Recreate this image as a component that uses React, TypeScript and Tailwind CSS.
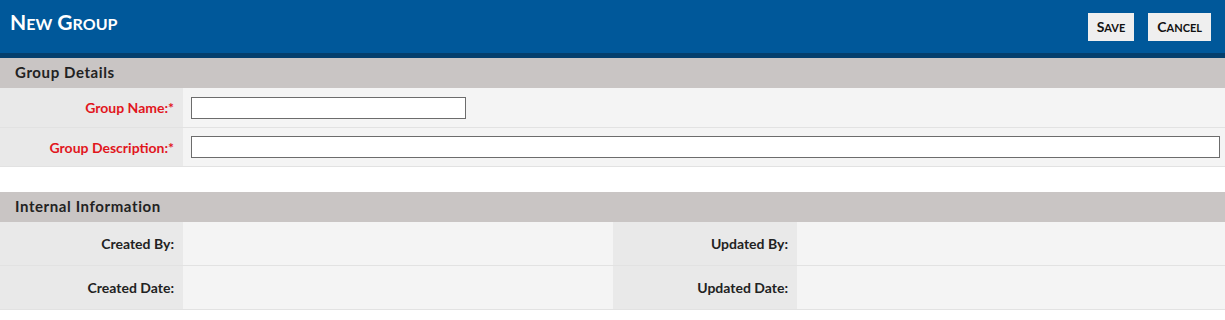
import React from 'react';

const font = { fontFamily: 'Lato, "Liberation Sans", sans-serif' };

const SectionHeader: React.FC<{ title: string }> = ({ title }) => (
  <div className="h-[30px] bg-[#c9c5c4] flex items-center pl-[15px] pb-[2px] text-[15px] font-bold tracking-[0.6px] text-[#222]">
    {title}
  </div>
);

const Label: React.FC<{ text: string; required?: boolean; className?: string }> = ({ text, required, className = '' }) => (
  <div
    className={`w-[183px] shrink-0 bg-[#e9e9e9] flex items-center justify-end pr-[9px] text-[14px] font-bold ${
      required ? 'text-[#e1161d]' : 'text-[#222]'
    } ${className}`}
  >
    {text}
    {required && '*'}
  </div>
);

export default function App() {
  return (
    <div className="w-[1225px] h-[320px] bg-white" style={font}>
      {/* Header bar */}
      <div className="h-[58px] bg-[#00589a] border-b-[5px] border-[#043f6d] flex items-center justify-between pl-[10px] pr-[14px]">
        <h1 className="text-white font-bold text-[21px] pb-[9px]">
          N<span className="text-[16px]">EW</span> G<span className="text-[16px]">ROUP</span>
        </h1>
        <div className="flex gap-[14px]">
          <button className="h-[28px] px-[9px] bg-[#efefef] text-[#111] font-bold text-[14px]">
            S<span className="text-[11px]">AVE</span>
          </button>
          <button className="h-[28px] px-[9px] bg-[#efefef] text-[#111] font-bold text-[14px]">
            C<span className="text-[11px]">ANCEL</span>
          </button>
        </div>
      </div>

      <SectionHeader title="Group Details" />
      <div className="flex h-[40px] border-b border-[#e2e2e2]">
        <Label text="Group Name:" required />
        <div className="flex-1 bg-[#f4f4f4] flex items-center pl-[8px]">
          <input className="w-[275px] h-[22px] border border-[#6c6c6c] bg-white outline-none" />
        </div>
      </div>
      <div className="flex h-[39px] border-b border-[#e2e2e2]">
        <Label text="Group Description:" required />
        <div className="flex-1 bg-[#f4f4f4] flex items-center pl-[8px] pr-[5px]">
          <input className="w-full h-[22px] border border-[#6c6c6c] bg-white outline-none" />
        </div>
      </div>

      <div className="h-[25px]" />

      <SectionHeader title="Internal Information" />
      <div className="flex h-[44px] border-b border-[#e2e2e2]">
        <Label text="Created By:" />
        <div className="w-[430px] bg-[#f4f4f4]" />
        <Label text="Updated By:" className="w-[184px]" />
        <div className="flex-1 bg-[#f4f4f4]" />
      </div>
      <div className="flex h-[44px] border-b border-[#e2e2e2]">
        <Label text="Created Date:" />
        <div className="w-[430px] bg-[#f4f4f4]" />
        <Label text="Updated Date:" className="w-[184px]" />
        <div className="flex-1 bg-[#f4f4f4]" />
      </div>
    </div>
  );
}
